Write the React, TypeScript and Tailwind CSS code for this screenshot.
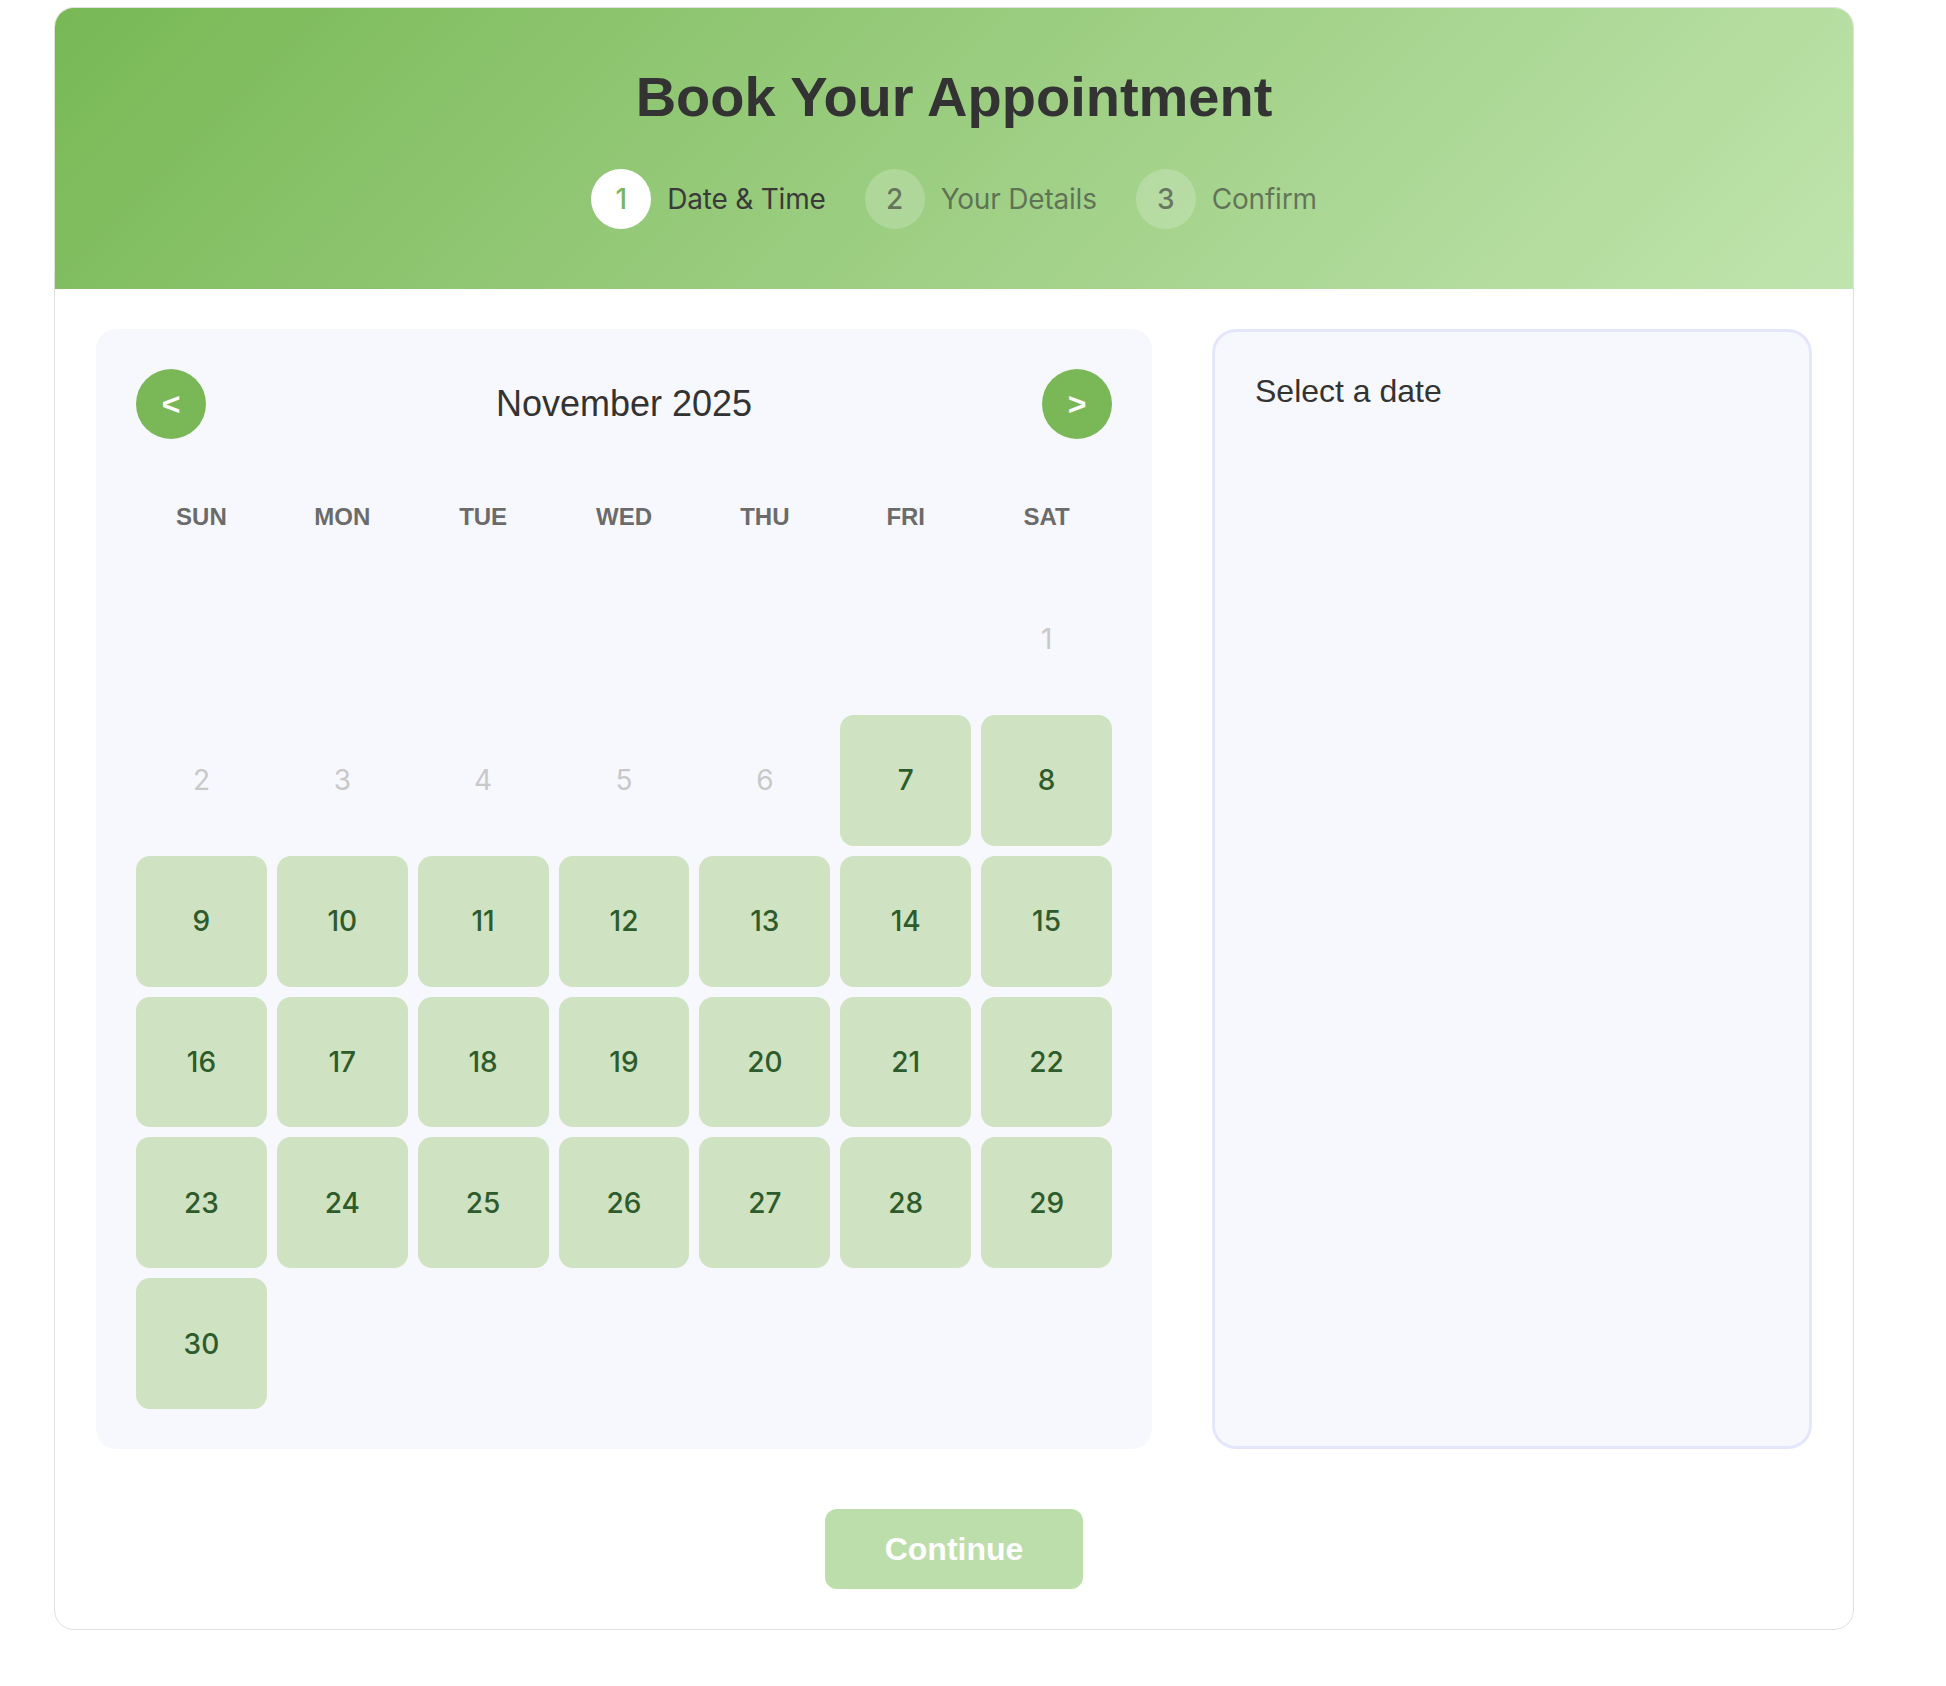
import React from "react";

type Cell = { day: number | null; available: boolean };

const weekDays = ["SUN", "MON", "TUE", "WED", "THU", "FRI", "SAT"];

function buildCells(): Cell[] {
  const cells: Cell[] = [];
  for (let i = 0; i < 6; i++) cells.push({ day: null, available: false });
  for (let d = 1; d <= 30; d++) cells.push({ day: d, available: d >= 7 });
  return cells;
}

function Step({ n, label, active }: { n: number; label: string; active?: boolean }) {
  return (
    <div className="flex items-center gap-[16px] font-['Inter','Liberation_Sans',sans-serif]">
      <div
        className={
          active
            ? "w-[60px] h-[60px] rounded-full bg-white flex items-center justify-center text-[28px] font-medium text-[#7ab857]"
            : "w-[60px] h-[60px] rounded-full bg-white/20 flex items-center justify-center text-[28px] font-medium text-[#333333]/60"
        }
      >
        {n}
      </div>
      <span
        className={
          active
            ? "text-[28px] tracking-[-0.2px] text-[#3a3a3a]"
            : "text-[28px] tracking-[-0.2px] text-[#333333]/60"
        }
      >
        {label}
      </span>
    </div>
  );
}

export default function App() {
  const cells = buildCells();
  return (
    <div className="min-h-screen bg-white pt-[7px] pl-[54px] font-['Liberation_Sans',Arial,sans-serif]">
      <div className="w-[1800px] rounded-[20px] border border-[#e0e0e0] overflow-hidden bg-white">
        <header className="bg-[linear-gradient(135deg,#78b855,#c0e4ae)] pt-[57px] pb-[60px] flex flex-col items-center">
          <h1 className="text-[56px] leading-[64px] font-bold text-[#333333]">Book Your Appointment</h1>
          <div className="mt-[40px] flex items-center gap-[39px]">
            <Step n={1} label="Date & Time" active />
            <Step n={2} label="Your Details" />
            <Step n={3} label="Confirm" />
          </div>
        </header>

        <div className="px-[41px] pt-[40px] pb-[40px]">
          <div className="flex gap-[60px] items-stretch">
            <div className="w-[1056px] bg-[#f7f8fe] rounded-[20px] p-[40px]">
              <div className="flex items-center justify-between h-[70px]">
                <button className="w-[70px] h-[70px] rounded-full bg-[#7ab857] text-white text-[32px] font-bold flex items-center justify-center">
                  &lt;
                </button>
                <div className="text-[36px] text-[#333333]">November 2025</div>
                <button className="w-[70px] h-[70px] rounded-full bg-[#7ab857] text-white text-[32px] font-bold flex items-center justify-center">
                  &gt;
                </button>
              </div>
              <div className="mt-[64px] grid grid-cols-7 gap-[10px]">
                {weekDays.map((d) => (
                  <div key={d} className="text-center text-[24px] leading-[28px] font-bold text-[#6b6b6b]">
                    {d}
                  </div>
                ))}
              </div>
              <div className="mt-[43px] grid grid-cols-7 gap-[10px] font-['Inter','Liberation_Sans',sans-serif]">
                {cells.map((c, i) => (
                  <div
                    key={i}
                    className={
                      c.day === null
                        ? "aspect-square"
                        : c.available
                        ? "aspect-square rounded-[14px] bg-[#cfe2c1] flex items-center justify-center text-[28px] font-medium text-[#2e5b2b]"
                        : "aspect-square flex items-center justify-center text-[28px] text-[#c8c8c8]"
                    }
                  >
                    {c.day}
                  </div>
                ))}
              </div>
            </div>
            <div className="w-[600px] bg-[#f7f8fe] rounded-[24px] border-[3px] border-[#e4e7fb] px-[40px] pt-[35px] pb-[40px]">
              <div className="text-[32px] text-[#333333]">Select a date</div>
            </div>
          </div>
          <div className="mt-[60px] flex justify-center">
            <button className="w-[258px] h-[80px] rounded-[12px] bg-[#bcdeab] text-white text-[32px] font-bold">
              Continue
            </button>
          </div>
        </div>
      </div>
    </div>
  );
}
